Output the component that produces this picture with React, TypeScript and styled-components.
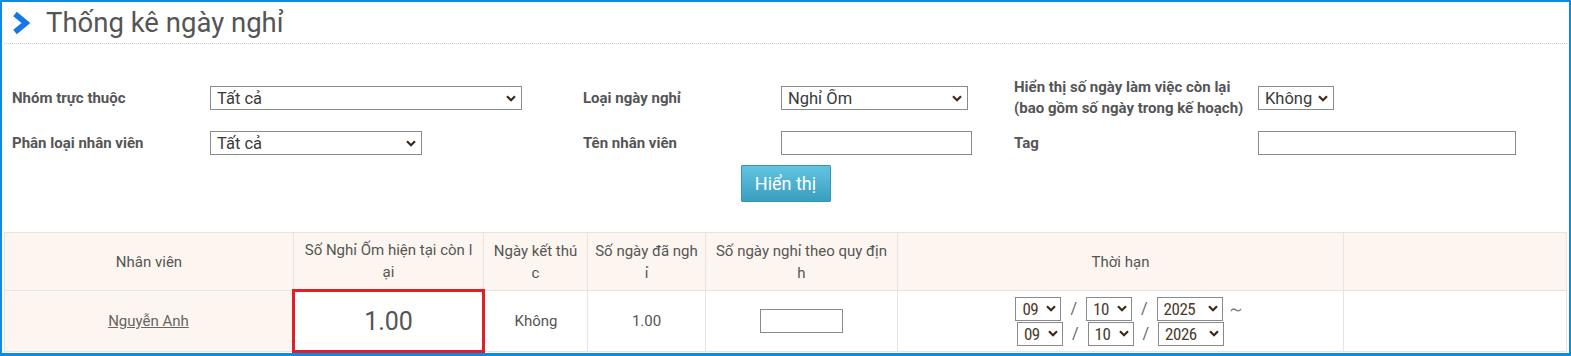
import React from "react";
import styled, { createGlobalStyle } from "styled-components";

const GlobalStyle = createGlobalStyle`
  body {
    margin: 0;
    font-family: Roboto, "Noto Sans", "Liberation Sans", sans-serif;
    color: #555;
    background: #fff;
  }
`;

const Frame = styled.div`
  box-sizing: border-box;
  height: 356px;
  border: 2px solid #0e8ae2;
  border-bottom-width: 3px;
  overflow: hidden;
  background: #fff;
`;

const TitleBar = styled.div`
  height: 41px;
  margin: 0 2px;
  padding-left: 8px;
  display: flex;
  align-items: center;
  gap: 15px;
  border-bottom: 1px dotted #c8c8c8;
`;

const Title = styled.h1`
  margin: 0;
  font-size: 27.5px;
  font-weight: 400;
  color: #555;
  line-height: 30px;
`;

const FilterGrid = styled.div`
  display: grid;
  grid-template-columns: 198px 373px 198px 233px 244px 1fr;
  grid-auto-rows: auto;
  row-gap: 12px;
  align-items: center;
  padding: 33px 0 0 10px;
`;

const Label = styled.div`
  font-size: 15px;
  font-weight: 700;
  color: #555;
  line-height: 21px;
  white-space: nowrap;
`;

const SelectBox = styled.div<{ $w: number; $h?: number }>`
  box-sizing: border-box;
  width: ${(p) => p.$w}px;
  height: ${(p) => p.$h ?? 24}px;
  border: 1px solid #8a8a8a;
  background: #fff;
  display: flex;
  align-items: center;
  padding: 0 5px 0 6px;
  gap: 4px;

  select {
    appearance: none;
    border: none;
    background: transparent;
    flex: 1;
    min-width: 0;
    padding: 0;
    font: inherit;
    font-size: 16.5px;
    color: #3a3a3a;
    outline: none;
  }
`;

const DateSelectBox = styled(SelectBox)`
  padding: 0 4px 0 6px;
  select {
    font-family: "Roboto Condensed", "DejaVu Sans Condensed", Roboto, sans-serif;
    font-stretch: condensed;
    font-size: 17px;
    letter-spacing: -0.5px;
    color: #4a3a2a;
  }
`;

const TextInput = styled.input<{ $w: number }>`
  box-sizing: border-box;
  width: ${(p) => p.$w}px;
  height: 24px;
  border: 1px solid #8a8a8a;
  padding: 0 4px;
  font: inherit;
  font-size: 14px;
`;

const ButtonRow = styled.div`
  display: flex;
  justify-content: center;
  padding-top: 10px;
`;

const ShowButton = styled.button`
  width: 90px;
  height: 37px;
  border: 1px solid #3495b4;
  border-radius: 1px;
  background: linear-gradient(#62c4e1, #3a9ebf);
  color: #fff;
  font-family: Roboto, sans-serif;
  font-size: 18px;
  padding: 0;
  cursor: pointer;
`;

const Table = styled.table`
  margin: 30px 0 0 2px;
  width: 1563px;
  border-collapse: collapse;
  table-layout: fixed;
  font-size: 15px;
  color: #555;
`;

const HeadCell = styled.th`
  background: #fdf5ef;
  border: 1px solid #e6e3e1;
  font-weight: 400;
  line-height: 22px;
  padding: 0 6px;
  text-align: center;
  vertical-align: middle;
`;

const Cell = styled.td<{ $highlight?: boolean }>`
  border: ${(p) => (p.$highlight ? "3px solid #e21f26" : "1px solid #e6e3e1")};
  text-align: center;
  vertical-align: middle;
  font-size: ${(p) => (p.$highlight ? "25px" : "15px")};
  padding: 0 6px;
`;

const HeadRow = styled.tr`
  height: 58px;
`;

const BodyRow = styled.tr`
  height: 61px;
`;

const NameLink = styled.a`
  color: #666;
  text-decoration: underline;
`;

const DateLine = styled.div`
  display: flex;
  justify-content: center;
  align-items: center;
  & + & {
    margin-top: 1px;
  }
`;

const Sep = styled.span`
  margin: 0 9px;
  font-size: 16px;
  color: #666;
`;

const Wave = styled.span`
  margin-left: 3px;
  margin-right: -20px;
  width: 20px;
  font-size: 18px;
  color: #777;
`;

const Chevron = () => (
  <svg width="10" height="7" viewBox="0 0 10 7" style={{ flexShrink: 0 }}>
    <polyline points="1,1.2 5,5.2 9,1.2" fill="none" stroke="#3a2a1a" strokeWidth="2.2" />
  </svg>
);

const TitleIcon = () => (
  <svg width="19" height="24" viewBox="0 0 19 24">
    <polyline points="3,3 14,12 3,21" fill="none" stroke="#1479e6" strokeWidth="5.5" strokeLinejoin="miter" />
  </svg>
);

function Select({ w, value, options }: { w: number; value: string; options: string[] }) {
  return (
    <SelectBox $w={w}>
      <select defaultValue={value}>
        {options.map((o) => (
          <option key={o}>{o}</option>
        ))}
      </select>
      <Chevron />
    </SelectBox>
  );
}

function DateSelect({ w, value }: { w: number; value: string }) {
  return (
    <DateSelectBox $w={w}>
      <select defaultValue={value}>
        <option>{value}</option>
      </select>
      <Chevron />
    </DateSelectBox>
  );
}

export default function App() {
  return (
    <Frame>
      <GlobalStyle />
      <TitleBar>
        <TitleIcon />
        <Title>Thống kê ngày nghỉ</Title>
      </TitleBar>

      <FilterGrid>
        <Label>Nhóm trực thuộc</Label>
        <Select w={312} value="Tất cả" options={["Tất cả"]} />
        <Label>Loại ngày nghỉ</Label>
        <Select w={187} value="Nghỉ Ốm" options={["Nghỉ Ốm"]} />
        <Label>
          Hiển thị số ngày làm việc còn lại
          <br />
          (bao gồm số ngày trong kế hoạch)
        </Label>
        <Select w={76} value="Không" options={["Không", "Có"]} />

        <Label>Phân loại nhân viên</Label>
        <Select w={212} value="Tất cả" options={["Tất cả"]} />
        <Label>Tên nhân viên</Label>
        <TextInput $w={191} />
        <Label>Tag</Label>
        <TextInput $w={258} />
      </FilterGrid>

      <ButtonRow>
        <ShowButton>Hiển thị</ShowButton>
      </ButtonRow>

      <Table>
        <colgroup>
          <col style={{ width: 289 }} />
          <col style={{ width: 190 }} />
          <col style={{ width: 104 }} />
          <col style={{ width: 118 }} />
          <col style={{ width: 192 }} />
          <col style={{ width: 446 }} />
          <col />
        </colgroup>
        <thead>
          <HeadRow>
            <HeadCell>Nhân viên</HeadCell>
            <HeadCell>
              Số Nghỉ Ốm hiện tại còn l<br />ại
            </HeadCell>
            <HeadCell>
              Ngày kết thú<br />c
            </HeadCell>
            <HeadCell>
              Số ngày đã ngh<br />ỉ
            </HeadCell>
            <HeadCell>
              Số ngày nghỉ theo quy địn<br />h
            </HeadCell>
            <HeadCell>Thời hạn</HeadCell>
            <HeadCell />
          </HeadRow>
        </thead>
        <tbody>
          <BodyRow>
            <HeadCell>
              <NameLink href="#">Nguyễn Anh</NameLink>
            </HeadCell>
            <Cell $highlight>1.00</Cell>
            <Cell>Không</Cell>
            <Cell>1.00</Cell>
            <Cell>
              <TextInput $w={83} style={{ height: 24 }} />
            </Cell>
            <Cell>
              <DateLine>
                <DateSelect w={46} value="09" />
                <Sep>/</Sep>
                <DateSelect w={46} value="10" />
                <Sep>/</Sep>
                <DateSelect w={66} value="2025" />
                <Wave>～</Wave>
              </DateLine>
              <DateLine>
                <DateSelect w={46} value="09" />
                <Sep>/</Sep>
                <DateSelect w={46} value="10" />
                <Sep>/</Sep>
                <DateSelect w={66} value="2026" />
              </DateLine>
            </Cell>
            <Cell />
          </BodyRow>
        </tbody>
      </Table>
    </Frame>
  );
}
